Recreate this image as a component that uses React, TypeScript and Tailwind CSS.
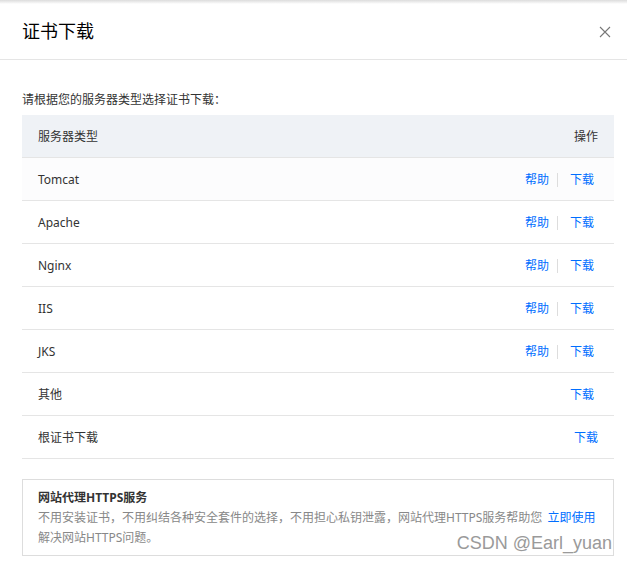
import React from "react";

const rows = [
  { name: "Tomcat", help: true, hover: true },
  { name: "Apache", help: true },
  { name: "Nginx", help: true },
  { name: "IIS", help: true },
  { name: "JKS", help: true },
  { name: "其他", help: false },
  { name: "根证书下载", help: false, wide: true },
];

export default function App() {
  return (
    <div className="relative h-[564px] w-[627px] overflow-hidden bg-white font-['Noto_Sans','Noto_Sans_CJK_SC',sans-serif] text-[#333]">
      {/* top shadow */}
      <div className="h-[4px] bg-gradient-to-b from-[#dcdcdc] to-white" />

      {/* header */}
      <div className="flex h-[56px] items-center justify-between border-b border-[#e5e5e5] pl-[22px] pr-[12px]">
        <h2 className="pb-[2px] text-[18px] leading-[24px] text-[#000]">证书下载</h2>
        <button type="button" className="flex h-[20px] w-[20px] items-center justify-center text-[#777]">
          <svg width="12" height="12" viewBox="0 0 12 12" fill="none" stroke="currentColor" strokeWidth="1.1">
            <path d="M1 1L11 11M11 1L1 11" />
          </svg>
        </button>
      </div>

      {/* body */}
      <div className="pl-[22px] pr-[13px] pt-[30px]">
        <p className="mb-[5px] text-[12px] leading-[20px]">请根据您的服务器类型选择证书下载：</p>

        <div className="flex h-[43px] items-center justify-between border-b border-[#e5e5e5] bg-[#eff2f6] pl-[16px] pr-[16px] pt-[2px] text-[12px]">
          <span>服务器类型</span>
          <span>操作</span>
        </div>

        {rows.map((r) => (
          <div
            key={r.name}
            className={`flex h-[43px] items-center justify-between border-b border-[#e5e5e5] pl-[16px] pt-[2px] text-[12px] ${
              r.wide ? "pr-[16px]" : "pr-[20px]"
            } ${r.hover ? "bg-[#fcfcfd]" : ""}`}
          >
            <span>{r.name}</span>
            <div className="flex items-center text-[#006eff]">
              {r.help && (
                <>
                  <span>帮助</span>
                  <span className="ml-[8px] mr-[12px] h-[14px] w-px bg-[#ddd]" />
                </>
              )}
              <span>下载</span>
            </div>
          </div>
        ))}

        {/* https service box */}
        <div className="mt-[20px] border border-[#ddd] pb-[7px] pl-[15px] pr-[8px] pt-[8px] text-[12px] leading-[20px]">
          <div className="font-bold text-[#333]">网站代理HTTPS服务</div>
          <div className="whitespace-nowrap text-[#888]">
            不用安装证书，不用纠结各种安全套件的选择，不用担心私钥泄露，网站代理HTTPS服务帮助您{" "}
            <a className="ml-[2px] text-[#006eff]">立即使用</a>
          </div>
          <div className="text-[#888]">解决网站HTTPS问题。</div>
        </div>
      </div>

      {/* watermark */}
      <div className="absolute right-[15px] top-[532px] font-['Liberation_Sans',sans-serif] text-[18px] leading-[22px] text-[#9a9a9a] [text-shadow:0_0_2px_#fff,0_0_1px_#fff]">
        CSDN @Earl_yuan
      </div>
    </div>
  );
}
